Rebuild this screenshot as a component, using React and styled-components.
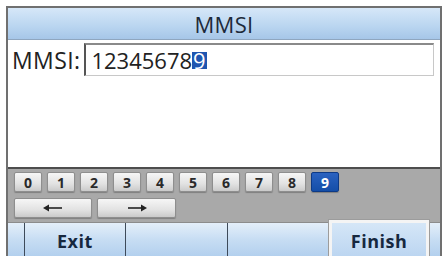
import React from 'react'
import styled, { createGlobalStyle } from 'styled-components'

const Global = createGlobalStyle`
  html, body {
    margin: 0;
    padding: 0;
    background: #ffffff;
    overflow: hidden;
  }
  body {
    font-family: "Open Sans", "Noto Sans", sans-serif;
  }
  * {
    box-sizing: border-box;
  }
`

const Screen = styled.div`
  margin: 6px 0 0 6px;
  width: 436px;
  height: 250px;
  border: 2px solid #707070;
  border-bottom: none;
  display: flex;
  flex-direction: column;
  background: #fff;
  overflow: hidden;
`

const TitleBar = styled.div`
  height: 32px;
  flex-shrink: 0;
  background: linear-gradient(#d6e7f8, #b9d5f0 60%, #a6c6e8);
  border-bottom: 1px solid #8fa6bf;
  display: flex;
  align-items: center;
  justify-content: center;
  font-size: 22px;
  font-weight: 500;
  color: #1d2a3a;
  letter-spacing: 0.3px;
`

const Body = styled.div`
  height: 129px;
  flex-shrink: 0;
  padding: 3px 6px 0 4px;
  border-bottom: 2px solid #4d4d4d;
`

const FieldRow = styled.div`
  display: flex;
  align-items: center;
  gap: 4px;
`

const Label = styled.span`
  font-size: 23px;
  color: #222;
  letter-spacing: 0.4px;
`

const Input = styled.div`
  flex: 1;
  height: 33px;
  border: 1px solid #c8c8c8;
  border-left: 2px solid #555;
  border-top: 2px solid #8a8a8a;
  display: flex;
  align-items: center;
  padding-left: 5px;
  font-size: 22px;
  color: #222;
`

const Cursor = styled.span`
  background: #1f56b0;
  color: #fff;
  line-height: 17px;
  padding: 0 1px;
`

const Keypad = styled.div`
  height: 53px;
  flex-shrink: 0;
  background: #a9a9a9;
  padding: 3px 6px 0;
  display: flex;
  flex-direction: column;
  gap: 6px;
`

const KeyRow = styled.div`
  display: flex;
  gap: 5px;
`

const Key = styled.div`
  width: ${p => p.$w || 28}px;
  height: 20px;
  border-radius: 2px;
  border: 1px solid ${p => (p.$active ? '#0d3a86' : '#8e8e8e')};
  background: ${p =>
    p.$active
      ? 'linear-gradient(#2a62c0, #144ea8)'
      : 'linear-gradient(#f6f6f6, #e2e2e2 60%, #cacaca)'};
  color: ${p => (p.$active ? '#fff' : '#2a2a2a')};
  font-size: 14px;
  font-weight: 700;
  display: flex;
  align-items: center;
  justify-content: center;
  box-shadow: 0 1px 1px rgba(0, 0, 0, 0.25);
`

const SoftBar = styled.div`
  flex: 1;
  display: flex;
  background: linear-gradient(#e4effa, #c7ddf3 50%, #b3d0ee);
  border-top: 1px solid #8c8c8c;
`

const Soft = styled.div`
  width: ${p => p.$w}px;
  border-right: ${p => (p.$last ? 'none' : '1.5px solid #3d4a5a')};
  display: flex;
  justify-content: center;
  padding-top: 8px;
  font-size: 18px;
  line-height: 20px;
  font-weight: 700;
  color: #16283f;
  letter-spacing: 0.5px;
`

const SelectedSoft = styled(Soft)`
  border: 3px solid #f4f4f4;
  border-bottom: none;
  margin-top: -3px;
  padding-top: 8px;
  background: linear-gradient(#d5e6f7, #bcd6f1);
  box-shadow: 0 0 0 1px #9c9c9c;
`

const digits = ['0', '1', '2', '3', '4', '5', '6', '7', '8', '9']

const Arrow = ({ dir }) => (
  <svg width="20" height="8" viewBox="0 0 20 8">
    {dir === 'left' ? (
      <>
        <line x1="5" y1="4" x2="19" y2="4" stroke="#222" strokeWidth="1.6" />
        <polygon points="0,4 6,0.5 6,7.5" fill="#222" />
      </>
    ) : (
      <>
        <line x1="1" y1="4" x2="15" y2="4" stroke="#222" strokeWidth="1.6" />
        <polygon points="20,4 14,0.5 14,7.5" fill="#222" />
      </>
    )}
  </svg>
)

export default function App() {
  return (
    <>
      <Global />
      <Screen>
        <TitleBar>MMSI</TitleBar>
        <Body>
          <FieldRow>
            <Label>MMSI:</Label>
            <Input>
              12345678<Cursor>9</Cursor>
            </Input>
          </FieldRow>
        </Body>
        <Keypad>
          <KeyRow>
            {digits.map(d => (
              <Key key={d} $active={d === '9'}>{d}</Key>
            ))}
          </KeyRow>
          <KeyRow>
            <Key $w={78}><Arrow dir="left" /></Key>
            <Key $w={79}><Arrow dir="right" /></Key>
          </KeyRow>
        </Keypad>
        <SoftBar>
          <Soft $w={17} />
          <Soft $w={102}>Exit</Soft>
          <Soft $w={103} />
          <Soft $w={102} />
          <SelectedSoft $w={101}>Finish</SelectedSoft>
          <Soft $w={11} $last />
        </SoftBar>
      </Screen>
    </>
  )
}
